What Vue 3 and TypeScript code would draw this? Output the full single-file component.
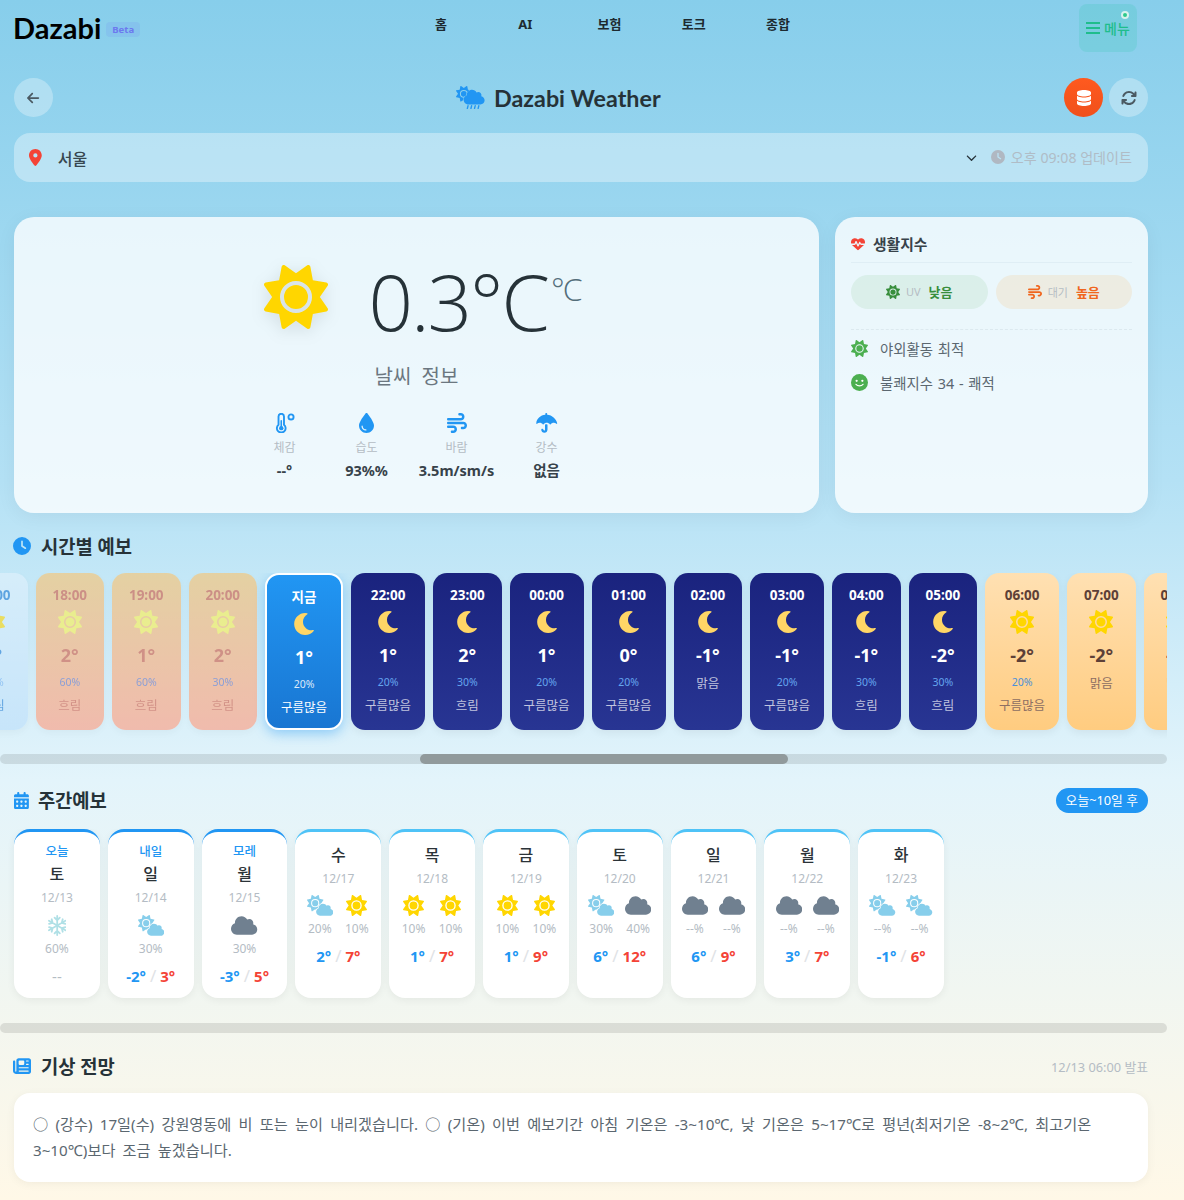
<script setup lang="ts">
import { h, onMounted, ref } from 'vue'

const SUN = 'M361.5 1.2c5 2.1 8.6 6.6 9.6 11.9L391 121l107.9 19.8c5.3 1 9.8 4.6 11.9 9.6s1.5 10.7-1.6 15.2L446.9 256l62.3 90.3c3.1 4.5 3.7 10.2 1.6 15.2s-6.6 8.6-11.9 9.6L391 391 371.1 498.9c-1 5.3-4.6 9.8-9.6 11.9s-10.7 1.5-15.2-1.6L256 446.9l-90.3 62.3c-4.5 3.1-10.2 3.7-15.2 1.6s-8.6-6.6-9.6-11.9L121 391 13.1 371.1c-5.3-1-9.8-4.6-11.9-9.6s-1.5-10.7 1.6-15.2L65.1 256 2.8 165.7c-3.1-4.5-3.7-10.2-1.6-15.2s6.6-8.6 11.9-9.6L121 121 140.9 13.1c1-5.3 4.6-9.8 9.6-11.9s10.7-1.5 15.2 1.6L256 65.1 346.3 2.8c4.5-3.1 10.2-3.7 15.2-1.6zM160 256a96 96 0 1 1 192 0 96 96 0 1 1 -192 0zm224 0a128 128 0 1 0 -256 0 128 128 0 1 0 256 0z'
const CLOUD = 'M0 336c0 79.5 64.5 144 144 144H512c70.7 0 128-57.3 128-128c0-61.9-44-113.6-102.4-125.4c4.1-10.7 6.4-22.4 6.4-34.6c0-53-43-96-96-96c-19.7 0-38.1 6-53.3 16.2C367 64.2 315.3 32 256 32C167.6 32 96 103.6 96 192c0 2.7 .1 5.4 .2 8.1C40.2 219.8 0 273.2 0 336z'
const flake = [0, 60, 120, 180, 240, 300]
  .map((a) => `<path transform="rotate(${a} 224 256)" d="M224 256V24M160 64l64 64 64-64" fill="none" stroke="currentColor" stroke-width="44" stroke-linecap="round" stroke-linejoin="round"/>`)
  .join('')

// [viewBox width, viewBox height, svg content]
const icons: Record<string, [number, number, string]> = {
  sun: [512, 512, `<path d="${SUN}"/>`],
  cloud: [640, 512, `<path d="${CLOUD}"/>`],
  cloudSun: [640, 512, `<g transform="scale(.78)"><path d="${SUN}"/></g><g transform="translate(222 190) scale(.655)"><path d="${CLOUD}" stroke="#fff" stroke-width="50" paint-order="stroke"/></g>`],
  cloudSunRain: [640, 512, `<g transform="scale(.68)"><path d="${SUN}"/></g><g transform="translate(170 62) scale(.73)"><path d="${CLOUD}" stroke="#93d4f0" stroke-width="30" paint-order="stroke"/></g><path d="M268 440l-16 60M348 440l-16 60M428 440l-16 60M508 440l-16 60" stroke="currentColor" stroke-width="30" stroke-linecap="round"/>`],
  moon: [512, 512, '<path d="M283.211 512c78.962 0 151.079-35.925 198.857-94.792 7.068-8.708-.639-21.43-11.562-19.35-124.203 23.654-238.262-71.576-238.262-196.954 0-72.222 38.662-138.635 101.498-174.394 9.686-5.512 7.25-20.197-3.756-22.23A258.156 258.156 0 0 0 283.211 0c-141.309 0-256 114.511-256 256 0 141.309 114.511 256 256 256z"/>'],
  snow: [448, 512, flake],
  arrowLeft: [448, 512, '<path d="M9.4 233.4c-12.5 12.5-12.5 32.8 0 45.3l160 160c12.5 12.5 32.8 12.5 45.3 0s12.5-32.8 0-45.3L109.2 288 416 288c17.7 0 32-14.3 32-32s-14.3-32-32-32l-306.7 0L214.6 118.6c12.5-12.5 12.5-32.8 0-45.3s-32.8-12.5-45.3 0l-160 160z"/>'],
  pin: [384, 512, '<path d="M215.7 499.2C267 435 384 279.4 384 192C384 86 298 0 192 0S0 86 0 192c0 87.4 117 243 168.3 307.2c12.3 15.3 35.1 15.3 47.4 0zM192 128a64 64 0 1 1 0 128 64 64 0 1 1 0-128z"/>'],
  chevron: [512, 512, '<path d="M233.4 406.6c12.5 12.5 32.8 12.5 45.3 0l192-192c12.5-12.5 12.5-32.8 0-45.3s-32.8-12.5-45.3 0L256 338.7 86.6 169.4c-12.5-12.5-32.8-12.5-45.3 0s-12.5 32.8 0 45.3l192 192z"/>'],
  clock: [512, 512, '<path d="M256 0a256 256 0 1 1 0 512A256 256 0 1 1 256 0zM232 120V256c0 8 4 15.5 10.7 20l96 64c11 7.4 25.9 4.4 33.3-6.7s4.4-25.9-6.7-33.3L280 243.2V120c0-13.3-10.7-24-24-24s-24 10.7-24 24z"/>'],
  database: [448, 512, '<path d="M448 80v48c0 44.2-100.3 80-224 80S0 172.2 0 128V80C0 35.8 100.3 0 224 0S448 35.8 448 80zM393.2 214.7c20.8-7.4 39.9-16.9 54.8-28.6V288c0 44.2-100.3 80-224 80S0 332.2 0 288V186.1c14.9 11.8 34 21.2 54.8 28.6C99.7 230.7 159.5 240 224 240s124.3-9.3 169.2-25.3zM0 346.1c14.9 11.8 34 21.2 54.8 28.6C99.7 390.7 159.5 400 224 400s124.3-9.3 169.2-25.3c20.8-7.4 39.9-16.9 54.8-28.6V432c0 44.2-100.3 80-224 80S0 476.2 0 432V346.1z"/>'],
  sync: [512, 512, '<path d="M105.1 202.6c7.7-21.8 20.2-42.3 37.8-59.8c62.5-62.5 163.8-62.5 226.3 0L386.3 160H352c-17.7 0-32 14.3-32 32s14.3 32 32 32H463.5c0 0 0 0 0 0h.4c17.7 0 32-14.3 32-32V80c0-17.7-14.3-32-32-32s-32 14.3-32 32v35.2L414.4 97.6c-87.5-87.5-229.3-87.5-316.8 0C73.2 122 55.6 150.7 44.8 181.4c-5.9 16.7 2.9 34.9 19.5 40.8s34.9-2.9 40.8-19.5zM39 289.3c-5 1.5-9.8 4.2-13.7 8.2c-4 4-6.7 8.8-8.1 14c-.3 1.2-.6 2.5-.8 3.8c-.3 1.7-.4 3.4-.4 5.1V432c0 17.7 14.3 32 32 32s32-14.3 32-32V396.9l17.6 17.5 0 0c87.5 87.4 229.3 87.4 316.7 0c24.4-24.4 42.1-53.1 52.9-83.7c5.9-16.7-2.9-34.9-19.5-40.8s-34.9 2.9-40.8 19.5c-7.7 21.8-20.2 42.3-37.8 59.8c-62.5 62.5-163.8 62.5-226.3 0l-.1-.1L125.6 352H160c17.7 0 32-14.3 32-32s-14.3-32-32-32H48.4c-1.6 0-3.2 .1-4.8 .3s-3.1 .5-4.6 1z"/>'],
  thermo: [512, 512, '<g fill="none" stroke="currentColor" stroke-width="48"><path d="M90 300V90a70 70 0 0 1 140 0V300a112 112 0 1 1-140 0z"/><circle cx="410" cy="100" r="66"/></g><circle cx="160" cy="388" r="56"/><path d="M160 388V200" stroke="currentColor" stroke-width="40" stroke-linecap="round"/>'],
  drop: [384, 512, '<path d="M192 512C86 512 0 426 0 320C0 228.8 130.2 57.7 166.6 11.7C172.6 4.2 181.5 0 191.1 0h1.8c9.6 0 18.5 4.2 24.5 11.7C253.8 57.7 384 228.8 384 320c0 106-86 192-192 192zM96 336c0-8.8-7.2-16-16-16s-16 7.2-16 16c0 61.9 50.1 112 112 112c8.8 0 16-7.2 16-16s-7.2-16-16-16c-44.2 0-80-35.8-80-80z"/>'],
  wind: [512, 512, '<path d="M288 32c0 17.7 14.3 32 32 32h32c17.7 0 32 14.3 32 32s-14.3 32-32 32H32c-17.7 0-32 14.3-32 32s14.3 32 32 32H352c53 0 96-43 96-96s-43-96-96-96H320c-17.7 0-32 14.3-32 32zm64 352c0 17.7 14.3 32 32 32h32c53 0 96-43 96-96s-43-96-96-96H32c-17.7 0-32 14.3-32 32s14.3 32 32 32H416c17.7 0 32 14.3 32 32s-14.3 32-32 32H384c-17.7 0-32 14.3-32 32zM128 512h32c53 0 96-43 96-96s-43-96-96-96H32c-17.7 0-32 14.3-32 32s14.3 32 32 32H160c17.7 0 32 14.3 32 32s-14.3 32-32 32H128c-17.7 0-32 14.3-32 32s14.3 32 32 32z"/>'],
  umbrella: [576, 512, '<path d="M288 0c13 0 24 11 24 24v22c125 11 228 100 256 217 3 12-11 21-21 13-18-15-41-24-67-24-31 0-59 14-78 36-6 7-17 7-23 0-20-22-48-36-79-36s-59 14-79 36c-6 7-17 7-23 0-19-22-47-36-78-36-26 0-49 9-67 24-10 8-24-1-21-13C40 146 139 57 264 46V24c0-13 11-24 24-24zM320 300v120c0 50-35 85-80 85s-76-30-80-70c-2-18 12-30 28-30s24 10 28 24c3 13 11 20 24 20 16 0 16-16 16-29V300c12-12 52-12 64 0z"/>'],
  heart: [512, 512, '<path d="M228.3 469.1L47.6 300.4c-4.2-3.9-8.2-8.1-11.9-12.4h87c22.6 0 43-13.6 51.7-34.5l10.5-25.2 49.3 109.5c3.8 8.5 12.1 14 21.4 14.1s17.8-5 22-13.3L320 253.7l1.7 3.4c9.5 19 28.9 31 50.1 31H476.3c-3.7 4.3-7.7 8.5-11.9 12.4L283.7 469.1c-7.5 7-17.4 10.9-27.7 10.9s-20.2-3.9-27.7-10.9zM503.7 240h-132c-3 0-5.8-1.7-7.2-4.4l-23.2-46.3c-4.1-8.1-12.4-13.3-21.5-13.3s-17.4 5.1-21.5 13.3l-41.4 82.8L205.9 158.2c-3.9-8.7-12.7-14.3-22.2-14.1s-18.1 5.9-21.8 14.8l-31.8 76.3c-1.2 3-4.2 4.9-7.4 4.9H16c-2.6 0-5 .4-7.3 1.1C3 225.2 0 208.2 0 190.9v-5.8c0-69.9 50.5-129.5 119.4-141C165 36.5 211.4 51.4 244 84l12 12 12-12c32.6-32.6 79-47.5 124.6-39.9C461.5 55.6 512 115.2 512 185.1v5.8c0 16.9-2.8 33.5-8.3 49.1z"/>'],
  smile: [512, 512, '<circle cx="256" cy="256" r="256"/><g fill="#fff"><circle cx="170" cy="205" r="34"/><circle cx="342" cy="205" r="34"/></g><path d="M150 310c50 60 162 60 212 0" fill="none" stroke="#fff" stroke-width="36" stroke-linecap="round"/>'],
  calendar: [448, 512, '<path d="M128 0c17.7 0 32 14.3 32 32V64H288V32c0-17.7 14.3-32 32-32s32 14.3 32 32V64h48c26.5 0 48 21.5 48 48v48H0V112C0 85.5 21.5 64 48 64H96V32c0-17.7 14.3-32 32-32zM0 192H448V464c0 26.5-21.5 48-48 48H48c-26.5 0-48-21.5-48-48V192zm64 80v32c0 8.8 7.2 16 16 16h32c8.8 0 16-7.2 16-16V272c0-8.8-7.2-16-16-16H80c-8.8 0-16 7.2-16 16zm128 0v32c0 8.8 7.2 16 16 16h32c8.8 0 16-7.2 16-16V272c0-8.8-7.2-16-16-16H208c-8.8 0-16 7.2-16 16zm144-16c-8.8 0-16 7.2-16 16v32c0 8.8 7.2 16 16 16h32c8.8 0 16-7.2 16-16V272c0-8.8-7.2-16-16-16H336zM64 400v32c0 8.8 7.2 16 16 16h32c8.8 0 16-7.2 16-16V400c0-8.8-7.2-16-16-16H80c-8.8 0-16 7.2-16 16zm144-16c-8.8 0-16 7.2-16 16v32c0 8.8 7.2 16 16 16h32c8.8 0 16-7.2 16-16V400c0-8.8-7.2-16-16-16H208zm112 16v32c0 8.8 7.2 16 16 16h32c8.8 0 16-7.2 16-16V400c0-8.8-7.2-16-16-16H336c-8.8 0-16 7.2-16 16z"/>'],
  news: [512, 512, '<path d="M96 96c0-35.3 28.7-64 64-64H448c35.3 0 64 28.7 64 64V416c0 35.3-28.7 64-64 64H80c-44.2 0-80-35.8-80-80V128c0-17.7 14.3-32 32-32s32 14.3 32 32V400c0 8.8 7.2 16 16 16s16-7.2 16-16V96zm64 24v80c0 13.3 10.7 24 24 24H296c13.3 0 24-10.7 24-24V120c0-13.3-10.7-24-24-24H184c-13.3 0-24 10.7-24 24zm208-8c0 8.8 7.2 16 16 16h48c8.8 0 16-7.2 16-16s-7.2-16-16-16H384c-8.8 0-16 7.2-16 16zm0 96c0 8.8 7.2 16 16 16h48c8.8 0 16-7.2 16-16s-7.2-16-16-16H384c-8.8 0-16 7.2-16 16zM160 304c0 8.8 7.2 16 16 16H432c8.8 0 16-7.2 16-16s-7.2-16-16-16H176c-8.8 0-16 7.2-16 16zm0 96c0 8.8 7.2 16 16 16H432c8.8 0 16-7.2 16-16s-7.2-16-16-16H176c-8.8 0-16 7.2-16 16z"/>'],
}

const Icon = (props: { name: string }) => {
  const [w, hh, inner] = icons[props.name]
  return h('svg', { viewBox: `0 0 ${w} ${hh}`, fill: 'currentColor', class: 'ic', innerHTML: inner })
}
Icon.props = ['name']

type Hour = { t: string; icon: string; temp: string; pct: string; desc: string; kind: string }

const hours: Hour[] = [
  { t: '17:00', icon: 'sun', temp: '3°', pct: '30%', desc: '흐림', kind: 'early' },
  { t: '18:00', icon: 'sun', temp: '2°', pct: '60%', desc: '흐림', kind: 'sunset' },
  { t: '19:00', icon: 'sun', temp: '1°', pct: '60%', desc: '흐림', kind: 'sunset' },
  { t: '20:00', icon: 'sun', temp: '2°', pct: '30%', desc: '흐림', kind: 'sunset' },
  { t: '지금', icon: 'moon', temp: '1°', pct: '20%', desc: '구름많음', kind: 'now' },
  { t: '22:00', icon: 'moon', temp: '1°', pct: '20%', desc: '구름많음', kind: 'night' },
  { t: '23:00', icon: 'moon', temp: '2°', pct: '30%', desc: '흐림', kind: 'night' },
  { t: '00:00', icon: 'moon', temp: '1°', pct: '20%', desc: '구름많음', kind: 'night' },
  { t: '01:00', icon: 'moon', temp: '0°', pct: '20%', desc: '구름많음', kind: 'night' },
  { t: '02:00', icon: 'moon', temp: '-1°', pct: '', desc: '맑음', kind: 'night' },
  { t: '03:00', icon: 'moon', temp: '-1°', pct: '20%', desc: '구름많음', kind: 'night' },
  { t: '04:00', icon: 'moon', temp: '-1°', pct: '30%', desc: '흐림', kind: 'night' },
  { t: '05:00', icon: 'moon', temp: '-2°', pct: '30%', desc: '흐림', kind: 'night' },
  { t: '06:00', icon: 'sun', temp: '-2°', pct: '20%', desc: '구름많음', kind: 'day' },
  { t: '07:00', icon: 'sun', temp: '-2°', pct: '', desc: '맑음', kind: 'day' },
  { t: '08:00', icon: 'sun', temp: '-1°', pct: '', desc: '맑음', kind: 'day' },
]

type Day = { label?: string; day: string; date: string; icons: string[]; pcts: string[]; lo?: string; hi?: string }

const days: Day[] = [
  { label: '오늘', day: '토', date: '12/13', icons: ['snow'], pcts: ['60%'] },
  { label: '내일', day: '일', date: '12/14', icons: ['cloudSun'], pcts: ['30%'], lo: '-2°', hi: '3°' },
  { label: '모레', day: '월', date: '12/15', icons: ['cloud'], pcts: ['30%'], lo: '-3°', hi: '5°' },
  { day: '수', date: '12/17', icons: ['cloudSun', 'sun'], pcts: ['20%', '10%'], lo: '2°', hi: '7°' },
  { day: '목', date: '12/18', icons: ['sun', 'sun'], pcts: ['10%', '10%'], lo: '1°', hi: '7°' },
  { day: '금', date: '12/19', icons: ['sun', 'sun'], pcts: ['10%', '10%'], lo: '1°', hi: '9°' },
  { day: '토', date: '12/20', icons: ['cloudSun', 'cloud'], pcts: ['30%', '40%'], lo: '6°', hi: '12°' },
  { day: '일', date: '12/21', icons: ['cloud', 'cloud'], pcts: ['--%', '--%'], lo: '6°', hi: '9°' },
  { day: '월', date: '12/22', icons: ['cloud', 'cloud'], pcts: ['--%', '--%'], lo: '3°', hi: '7°' },
  { day: '화', date: '12/23', icons: ['cloudSun', 'cloudSun'], pcts: ['--%', '--%'], lo: '-1°', hi: '6°' },
]

const stats = [
  { icon: 'thermo', label: '체감', value: '--°' },
  { icon: 'drop', label: '습도', value: '93%%' },
  { icon: 'wind', label: '바람', value: '3.5m/sm/s' },
  { icon: 'umbrella', label: '강수', value: '없음' },
]

const nav = ['홈', 'AI', '보험', '토크', '종합']

const scroller = ref<HTMLElement | null>(null)

onMounted(() => {
  const el = scroller.value
  const now = el?.querySelector('.now') as HTMLElement | null
  if (el && now) el.scrollLeft = now.offsetLeft - 265
})
</script>

<template>
  <div class="page">
    <header class="topbar">
      <div class="logo">Dazabi <span class="beta">Beta</span></div>
      <nav class="nav">
        <a v-for="n in nav" :key="n">{{ n }}</a>
      </nav>
      <button class="menu">
        <span class="bars"><i></i><i></i><i></i></span>메뉴
        <span class="dot"></span>
      </button>
    </header>

    <div class="titlebar">
      <button class="round"><Icon name="arrowLeft" /></button>
      <h1><Icon name="cloudSunRain" class="title-ic" />Dazabi Weather</h1>
      <div class="actions">
        <button class="round db"><Icon name="database" /></button>
        <button class="round sync"><Icon name="sync" /></button>
      </div>
    </div>

    <div class="location">
      <Icon name="pin" class="pin" />
      <span class="city">서울</span>
      <Icon name="chevron" class="chev" />
      <Icon name="clock" class="clock" />
      <span class="updated">오후 09:08 업데이트</span>
    </div>

    <div class="main-row">
      <section class="card current">
        <div class="hero">
          <Icon name="sun" class="hero-sun" />
          <div class="temp">0.3°C</div>
          <div class="unit">°C</div>
        </div>
        <div class="cond">날씨 정보</div>
        <div class="stats">
          <div v-for="s in stats" :key="s.label" class="stat">
            <Icon :name="s.icon" class="stat-ic" />
            <span class="stat-label">{{ s.label }}</span>
            <b class="stat-value">{{ s.value }}</b>
          </div>
        </div>
      </section>

      <aside class="card life">
        <div class="life-head"><Icon name="heart" class="heart" />생활지수</div>
        <div class="pills">
          <div class="pill green"><Icon name="sun" /><span>UV</span><b>낮음</b></div>
          <div class="pill orange"><Icon name="wind" /><span>대기</span><b>높음</b></div>
        </div>
        <div class="tips">
          <div class="tip"><Icon name="sun" />야외활동 최적</div>
          <div class="tip"><Icon name="smile" />불쾌지수 34 - 쾌적</div>
        </div>
      </aside>
    </div>

    <h2 class="sec hour-title"><Icon name="clock" />시간별 예보</h2>
    <div ref="scroller" class="hours">
      <div v-for="o in hours" :key="o.t" class="hour" :class="o.kind">
        <div class="h-time">{{ o.t }}</div>
        <Icon :name="o.icon" class="h-ic" />
        <div class="h-temp">{{ o.temp }}</div>
        <div v-if="o.pct" class="h-pct">{{ o.pct }}</div>
        <div class="h-desc">{{ o.desc }}</div>
      </div>
    </div>
    <div class="bar"><div class="thumb"></div></div>

    <div class="week-head">
      <h2 class="sec"><Icon name="calendar" />주간예보</h2>
      <span class="badge">오늘~10일 후</span>
    </div>
    <div class="week">
      <div v-for="d in days" :key="d.date" class="wday" :class="{ soon: d.label }">
        <div v-if="d.label" class="w-label">{{ d.label }}</div>
        <div class="w-day">{{ d.day }}</div>
        <div class="w-date">{{ d.date }}</div>
        <div class="w-cols">
          <div v-for="(ic, i) in d.icons" :key="i" class="w-col">
            <Icon :name="ic" class="w-ic" :class="ic" />
            <span class="w-pct">{{ d.pcts[i] }}</span>
          </div>
        </div>
        <div class="w-temp">
          <template v-if="d.lo">
            <span class="lo">{{ d.lo }}</span><span class="sl">/</span><span class="hi">{{ d.hi }}</span>
          </template>
          <span v-else class="none">--</span>
        </div>
      </div>
    </div>
    <div class="bar"></div>

    <div class="fc-head">
      <h2 class="sec"><Icon name="news" />기상 전망</h2>
      <span class="issued">12/13 06:00 발표</span>
    </div>
    <div class="forecast">
      ○ (강수) 17일(수) 강원영동에 비 또는 눈이 내리겠습니다. ○ (기온) 이번 예보기간 아침 기온은 -3~10℃, 낮 기온은 5~17℃로 평년(최저기온 -8~2℃, 최고기온 3~10℃)보다 조금 높겠습니다.
    </div>
  </div>
</template>

<style>
body {
  margin: 0;
}
</style>

<style scoped>
.page {
  box-sizing: border-box;
  height: 1200px;
  overflow: hidden;
  padding: 0 36px 0 14px;
  background: linear-gradient(180deg, #87ceeb 0%, #b4e1f5 40%, #e3f4fb 65%, #fff8e7 100%);
  font-family: 'Noto Sans', 'Noto Sans CJK KR', sans-serif;
  color: #263238;
}
.ic {
  display: block;
  height: 1em;
  width: auto;
  flex-shrink: 0;
}
button {
  border: 0;
  padding: 0;
  font-family: inherit;
  cursor: pointer;
}

.topbar {
  display: flex;
  height: 62px;
}
.logo {
  flex: 0 0 386px;
  display: flex;
  align-items: center;
  gap: 5px;
  height: 54px;
  margin-left: -1px;
  font-family: Lato, 'Noto Sans', sans-serif;
  font-size: 29px;
  font-weight: 700;
  color: #000;
}
.beta {
  padding: 1px 6px;
  border-radius: 4px;
  background: rgba(99, 102, 241, 0.1);
  color: #6c79ef;
  font-size: 9.5px;
  font-weight: 700;
  font-family: 'Noto Sans', sans-serif;
  margin-top: 4px;
}
.nav {
  flex: 0 0 421px;
  display: flex;
  height: 48px;
}
.nav a {
  flex: 1;
  text-align: center;
  font-size: 13px;
  font-weight: 700;
  line-height: 48px;
  color: #1d2a30;
}
.menu {
  position: relative;
  margin: 4px 11px 0 auto;
  width: 58px;
  height: 48px;
  border-radius: 8px;
  background: rgba(38, 198, 166, 0.18);
  color: #1fbd8c;
  font-size: 14px;
  font-weight: 500;
  display: flex;
  align-items: center;
  justify-content: center;
  gap: 4px;
}
.bars {
  display: flex;
  flex-direction: column;
  gap: 3px;
}
.bars i {
  display: block;
  width: 14px;
  height: 2px;
  background: #1fbd8c;
}
.dot {
  position: absolute;
  top: 7px;
  right: 8px;
  width: 4px;
  height: 4px;
  border-radius: 50%;
  background: #2fc98c;
  border: 2px solid #d8f3ee;
}

.titlebar {
  display: flex;
  align-items: center;
  justify-content: space-between;
  margin-top: 16px;
}
.round {
  width: 39px;
  height: 39px;
  border-radius: 50%;
  background: rgba(255, 255, 255, 0.3);
  color: #4b5a63;
  font-size: 14px;
  display: flex;
  align-items: center;
  justify-content: center;
}
.sync {
  font-size: 16px;
}
.db {
  background: linear-gradient(180deg, #ff5a1f, #f0501b);
  color: #fff;
  font-size: 16px;
}
.actions {
  display: flex;
  gap: 6px;
}
h1 {
  margin: 0;
  display: flex;
  align-items: center;
  gap: 9px;
  font-family: Lato, 'Noto Sans', sans-serif;
  font-size: 23.3px;
  font-weight: 700;
  color: #263238;
}
.title-ic {
  font-size: 23px;
  color: #2196f3;
}

.location {
  display: flex;
  align-items: center;
  height: 49px;
  margin-top: 16px;
  padding: 0 16px 0 15px;
  border-radius: 16px;
  background: rgba(255, 255, 255, 0.35);
}
.pin {
  font-size: 17px;
  color: #f44336;
}
.city {
  margin-left: 16px;
  font-size: 16px;
  font-weight: 500;
  color: #37474f;
}
.chev {
  margin-left: auto;
  font-size: 11px;
  color: #263238;
}
.clock {
  margin-left: 14px;
  font-size: 14px;
  margin-top: -2px;
  color: #b0b8c2;
}
.updated {
  margin-left: 6px;
  margin-top: -2px;
  font-size: 14.1px;
  color: #b0bcc6;
}

.main-row {
  display: flex;
  gap: 16px;
  margin-top: 35px;
  height: 296px;
}
.card {
  box-sizing: border-box;
  border-radius: 20px;
  background: rgba(255, 255, 255, 0.78);
  box-shadow: 0 4px 20px rgba(0, 0, 0, 0.05);
}
.current {
  flex: 0 0 805px;
  padding-top: 43px;
}
.hero {
  display: flex;
  align-items: flex-start;
  justify-content: center;
  height: 80px;
  padding-left: 12px;
}
.hero-sun {
  font-size: 64px;
  margin-top: 5px;
  color: #ffd600;
  filter: drop-shadow(0 4px 8px rgba(0, 0, 0, 0.1));
}
.temp {
  margin-left: 40px;
  margin-top: -4px;
  font-family: 'Open Sans', sans-serif;
  font-size: 78px;
  font-weight: 300;
  line-height: 90px;
  letter-spacing: -2px;
  color: #263238;
}
.unit {
  margin-left: 3px;
  margin-top: 9px;
  font-family: 'Open Sans', sans-serif;
  font-size: 32px;
  font-weight: 300;
  letter-spacing: -2px;
  line-height: 40px;
  color: #546e7a;
}
.cond {
  margin-top: 24px;
  text-align: center;
  font-size: 20px;
  line-height: 26px;
  word-spacing: 5px;
  color: #6b7780;
}
.stats {
  display: grid;
  grid-template-columns: 80px 84px 96px 84px;
  justify-content: center;
  margin-top: 23px;
}
.stat {
  display: flex;
  flex-direction: column;
  align-items: center;
}
.stat-ic {
  font-size: 20px;
  color: #2196f3;
}
.stat-label {
  margin-top: 7px;
  font-size: 12px;
  line-height: 16px;
  color: #b4bcc4;
}
.stat-value {
  margin-top: 4px;
  font-size: 14.5px;
  line-height: 20px;
  font-weight: 700;
  color: #37424a;
}

.life {
  flex: 1;
  padding: 16px;
}
.life-head {
  display: flex;
  align-items: center;
  gap: 8px;
  line-height: 22px;
  padding-bottom: 7px;
  font-size: 14.8px;
  font-weight: 600;
  color: #37424a;
  border-bottom: 1px solid #dfeef5;
}
.heart {
  font-size: 14px;
  color: #f44336;
}
.pills {
  display: flex;
  gap: 8px;
  margin-top: 12px;
  padding-bottom: 20px;
  border-bottom: 1px dashed #dce9ef;
}
.pill {
  flex: 1;
  box-sizing: border-box;
  height: 34px;
  padding-bottom: 1px;
  border-radius: 17px;
  display: flex;
  align-items: center;
  justify-content: center;
  font-size: 13px;
}
.pill .ic {
  font-size: 14px;
}
.pill span {
  margin: 0 8px 0 6px;
  font-size: 11px;
  color: #b5bdc4;
}
.pill b {
  font-weight: 600;
}
.green {
  background: rgba(76, 175, 80, 0.1);
  color: #388e3c;
}
.orange {
  background: rgba(255, 152, 0, 0.1);
  color: #f0661e;
}
.tips {
  margin-top: 8px;
  display: flex;
  flex-direction: column;
  gap: 14px;
}
.tip {
  display: flex;
  align-items: center;
  gap: 12px;
  height: 20px;
  font-size: 14.4px;
  word-spacing: 1px;
  color: #5b6770;
}
.tip .ic {
  font-size: 17px;
  color: #4caf50;
}

.sec {
  box-sizing: border-box;
  margin: 0;
  display: flex;
  align-items: center;
  gap: 10px;
  height: 24px;
  padding-bottom: 2px;
  font-size: 18.75px;
  font-weight: 700;
  color: #263238;
}
.sec .ic {
  font-size: 18px;
  color: #2196f3;
  margin-top: 2px;
}
.hour-title {
  margin-top: 21px;
  margin-left: -1px;
}
.hours {
  display: flex;
  position: relative;
  gap: 8px;
  margin: 15px -19px 0 -14px;
  padding-bottom: 24px;
  overflow: hidden;
}
.bar {
  position: relative;
  height: 10px;
  margin: 0 -19px 0 -14px;
  border-radius: 5px;
  background: rgba(0, 0, 0, 0.1);
}
.thumb {
  position: absolute;
  left: 420px;
  top: 0;
  bottom: 0;
  width: 368px;
  border-radius: 5px;
  background: #919a9c;
}
.hour {
  flex: 0 0 auto;
  box-sizing: border-box;
  min-width: 68.5px;
  height: 157px;
  padding: 12px 14px 0;
  border-radius: 14px;
  display: flex;
  flex-direction: column;
  align-items: center;
  box-shadow: 0 3px 8px rgba(0, 0, 0, 0.06);
}
.h-time {
  height: 20px;
  line-height: 20px;
  font-size: 13.5px;
  font-weight: 700;
}
.h-ic {
  margin-top: 5px;
  font-size: 24px;
}
.h-temp {
  margin-top: 9px;
  height: 24px;
  line-height: 24px;
  font-size: 18px;
  font-weight: 700;
}
.h-pct {
  margin-top: 7px;
  height: 16px;
  line-height: 16px;
  font-size: 10.5px;
  color: #64a5ee;
}
.h-desc {
  margin-top: 7px;
  height: 18px;
  line-height: 18px;
  font-size: 12.5px;
  white-space: nowrap;
}
.h-temp + .h-desc {
  margin-top: 8px;
}
.day .h-ic,
.early .h-ic {
  color: #ffd600;
}
.night {
  background: linear-gradient(180deg, #1a237e, #283593);
  color: #fff;
}
.night .h-desc {
  color: rgba(255, 255, 255, 0.72);
}
.now {
  background: linear-gradient(180deg, #2196f3, #1976d2);
  color: #fff;
  border: 2px solid #fff;
  box-shadow: 0 4px 12px rgba(33, 150, 243, 0.4);
}
.now .h-pct {
  color: rgba(255, 255, 255, 0.85);
}
.night .h-ic,
.now .h-ic {
  color: #ffd666;
  font-size: 22px;
  margin-top: 6px;
  margin-bottom: 1px;
}
.day {
  background: linear-gradient(180deg, #ffe0b2, #ffcc80);
  color: #5d4037;
}
.day .h-desc {
  color: #8d6e63;
}
.day .h-pct {
  color: #4a90d9;
}
.sunset {
  background: linear-gradient(180deg, #fbc36c, #ff987a);
  color: #d0553c;
  opacity: 0.6;
}
.sunset .h-pct {
  color: #5c6bc0;
}
.sunset .h-ic {
  color: #fff04a;
}
.early {
  background: linear-gradient(180deg, #e3f2fd, #bbdefb);
  color: #1976d2;
  opacity: 0.6;
}

.week-head,
.fc-head {
  display: flex;
  align-items: center;
  justify-content: space-between;
}
.week-head {
  margin-top: 24px;
  height: 25px;
}
.week-head .sec {
  gap: 9px;
}
.week-head .sec .ic {
  font-size: 17px;
}
.badge {
  height: 25px;
  padding: 0 10px;
  line-height: 25px;
  border-radius: 13px;
  background: #2196f3;
  color: #fff;
  font-size: 12.8px;
}
.week {
  display: flex;
  gap: 8px;
  margin: 16px -19px 0 -14px;
  padding: 0 14px 25px;
  overflow: hidden;
}
.wday {
  flex: 0 0 85.8px;
  box-sizing: border-box;
  height: 169px;
  padding-top: 13px;
  border-top: 3px solid #4fc3f7;
  border-radius: 16px;
  background: #fff;
  box-shadow: 0 2px 8px rgba(0, 0, 0, 0.06);
  text-align: center;
}
.soon {
  border-top-color: #2196f3;
}
.w-label {
  height: 16px;
  line-height: 16px;
  margin-top: -1px;
  font-size: 12.5px;
  font-weight: 500;
  color: #2196f3;
}
.w-day {
  height: 20px;
  line-height: 20px;
  font-size: 16px;
  font-weight: 500;
  color: #2b3338;
}
.soon .w-day {
  margin-top: 4px;
}
.w-date {
  margin-top: 6px;
  height: 16px;
  line-height: 16px;
  font-size: 12px;
  color: #b4bcc4;
}
.w-cols {
  display: flex;
  justify-content: center;
  gap: 9px;
  margin-top: 6px;
}
.soon .w-cols {
  margin-top: 7px;
}
.w-col {
  width: 28px;
  display: flex;
  flex-direction: column;
  align-items: center;
}
.w-ic {
  height: 21px;
  margin: 2px 0 1px;
}
.w-ic.sun {
  color: #ffd600;
}
.w-ic.cloud {
  color: #708090;
}
.w-ic.cloudSun {
  color: #87ceeb;
}
.w-ic.snow {
  color: #b0e0e6;
}
.w-pct {
  margin-top: 4px;
  height: 16px;
  line-height: 16px;
  font-size: 12px;
  color: #b4bcc4;
  white-space: nowrap;
}
.w-temp {
  margin-top: 9px;
  height: 20px;
  line-height: 20px;
  font-size: 15px;
  font-weight: 700;
}
.lo {
  color: #2196f3;
}
.hi {
  color: #f44336;
}
.sl {
  margin: 0 4px;
  font-size: 17px;
  color: #dfe3e6;
  font-weight: 400;
}
.none {
  color: #b4bcc4;
  font-weight: 400;
}

.fc-head {
  margin-top: 21px;
  height: 24px;
}
.fc-head .sec {
  margin-left: -1px;
}
.issued {
  font-size: 12.8px;
  color: #b4bcc4;
}
.forecast {
  box-sizing: border-box;
  height: 89px;
  margin-top: 15px;
  padding: 18px 19px;
  border-radius: 16px;
  background: #fff;
  box-shadow: 0 2px 10px rgba(0, 0, 0, 0.05);
  font-size: 15.2px;
  line-height: 26px;
  word-spacing: 3.3px;
  color: #5b6770;
}
</style>
